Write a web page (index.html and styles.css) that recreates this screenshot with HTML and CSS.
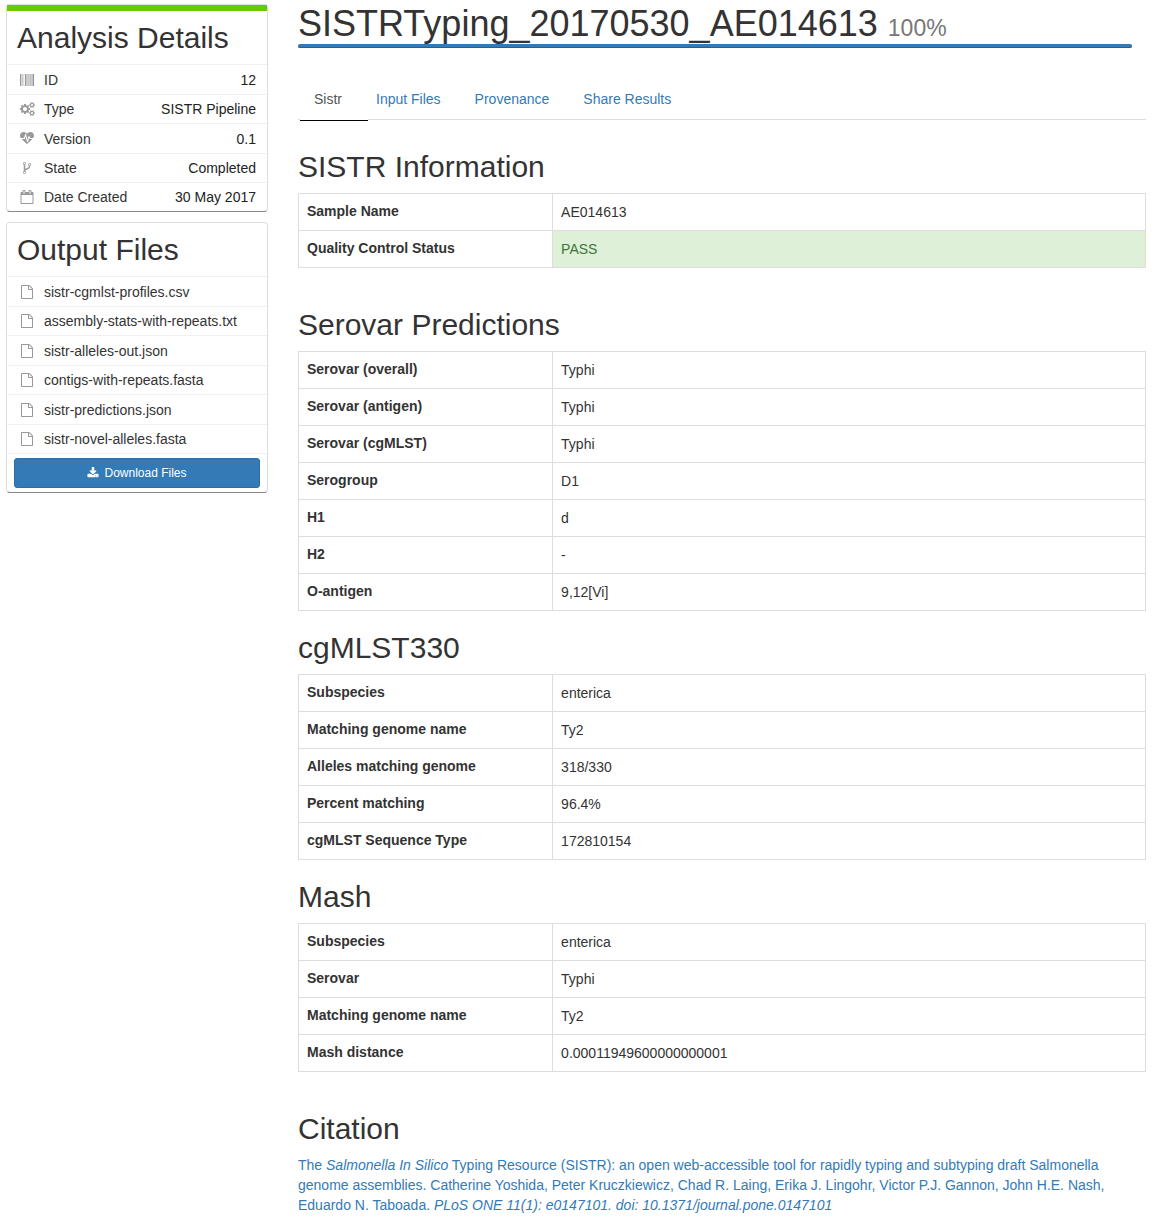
FILE: index.html
```html
<!DOCTYPE html>
<html lang="en">
<head>
<meta charset="utf-8">
<title>SISTRTyping_20170530_AE014613</title>
<link rel="stylesheet" href="styles.css">
</head>
<body>
<svg class="sprite" aria-hidden="true">
  <symbol id="barcode" viewBox="0 0 14 12"><path d="M0 0h1v12H0zM1.500 0h.4v12h-.4zM2.500 0h.5v12h-.5zM3.700 0h.4v12h-.4zM5 0h1v12H5zM6.500 0h.5v12h-.5zM7.500 0h.5v12h-.5zM8.500 0h.8v12h-.8zM9.800 0h.8v12h-.8zM11 0h.5v12H11zM12 0h.6v12H12zM13 0h1v12h-1z"/></symbol>
  <symbol id="cogs" viewBox="0 0 1920 1792"><path d="M896 896q0-106-75-181t-181-75-181 75-75 181 75 181 181 75 181-75 75-181zm768 512q0-52-38-90t-90-38-90 38-38 90q0 53 37.500 90.500t90.500 37.500 90.500-37.500 37.500-90.500zm0-1024q0-52-38-90t-90-38-90 38-38 90q0 53 37.500 90.500t90.500 37.500 90.500-37.500 37.500-90.500zm-384 421v185q0 10-7 19.500t-16 10.500l-155 24q-11 35-32 76 34 48 90 115 7 11 7 20 0 12-7 19-23 30-82.500 89.500t-78.500 59.500q-11 0-21-7l-115-90q-37 19-77 31-11 108-23 155-7 24-30 24h-186q-11 0-20-7.500t-10-17.500l-23-153q-34-10-75-31l-118 89q-7 7-20 7-11 0-21-8-144-133-144-160 0-9 7-19 10-14 41-53t47-61q-23-44-35-82l-152-24q-10-1-17-9.500t-7-19.500v-185q0-10 7-19.500t16-10.500l155-24q11-35 32-76-34-48-90-115-7-11-7-20 0-12 7-20 22-30 82-89t79-59q11 0 21 7l115 90q34-18 77-32 11-108 23-154 7-24 30-24h186q11 0 20 7.500t10 17.500l23 153q34 10 75 31l118-89q8-7 20-7 11 0 21 8 144 133 144 160 0 9-7 19-12 16-42 54t-45 60q23 48 34 82l152 23q10 2 17 10.500t7 19.500zm640 533v140q0 16-149 31-12 27-30 52 51 113 51 138 0 4-4 7-122 71-124 71-8 0-46-47t-52-68q-20 2-30 2t-30-2q-14 21-52 68t-46 47q-2 0-124-71-4-3-4-7 0-25 51-138-18-25-30-52-149-15-149-31v-140q0-16 149-31 13-29 30-52-51-113-51-138 0-4 4-7 4-2 35-20t59-34 30-16q8 0 46 46.500t52 67.500q20-2 30-2t30 2q51-71 92-112l6-2q4 0 124 70 4 3 4 7 0 25-51 138 17 23 30 52 149 15 149 31zm0-1024v140q0 16-149 31-12 27-30 52 51 113 51 138 0 4-4 7-122 71-124 71-8 0-46-47t-52-68q-20 2-30 2t-30-2q-14 21-52 68t-46 47q-2 0-124-71-4-3-4-7 0-25 51-138-18-25-30-52-149-15-149-31v-140q0-16 149-31 13-29 30-52-51-113-51-138 0-4 4-7 4-2 35-20t59-34 30-16q8 0 46 46.500t52 67.500q20-2 30-2t30 2q51-71 92-112l6-2q4 0 124 70 4 3 4 7 0 25-51 138 17 23 30 52 149 15 149 31z"/></symbol>
  <symbol id="heartbeat" viewBox="0 0 1792 1792"><path d="M1280 896h305q-5 6-10 10.500t-9 7.500l-3 4-623 600q-18 18-44 18t-44-18l-624-602q-5-2-21-20h369q22 0 39.500-13.500t22.500-34.500l70-281 190 667q6 20 23 33t39 13q21 0 38-13t23-33l146-485 56 112q18 35 57 35zm512-428q0 145-103 300h-369l-111-221q-8-17-25.500-27t-36.500-8q-45 5-56 46l-129 430-196-686q-6-20-23.500-33t-39.500-13-39 13.500-22 34.500l-116 464h-423q-103-155-103-300 0-220 127-344t351-124q62 0 126.500 21.500t120 58 95.500 68.500 76 68q36-36 76-68t95.500-68.500 120-58 126.500-21.500q224 0 351 124t127 344z"/></symbol>
  <symbol id="fork" viewBox="0 0 1792 1792"><path d="M672 1472q0-40-28-68t-68-28-68 28-28 68 28 68 68 28 68-28 28-68zm0-1152q0-40-28-68t-68-28-68 28-28 68 28 68 68 28 68-28 28-68zm640 128q0-40-28-68t-68-28-68 28-28 68 28 68 68 28 68-28 28-68zm96 0q0 52-26 96.500t-70 69.500q-2 287-226 414-67 38-203 81-128 40-169.500 71t-41.500 100v26q44 25 70 69.500t26 96.500q0 80-56 136t-136 56-136-56-56-136q0-52 26-96.500t70-69.500v-820q-44-25-70-69.500t-26-96.500q0-80 56-136t136-56 136 56 56 136q0 52-26 96.500t-70 69.500v497q54-26 154-57 55-17 87.500-29.500t70.500-31 59-39.500 40.500-51 28-69.500 8.500-91.500q-44-25-70-69.500t-26-96.500q0-80 56-136t136-56 136 56 56 136z"/></symbol>
  <symbol id="calendar" viewBox="0 0 1792 1792"><path d="M192 1664h1408v-1024h-1408v1024zm384-1216v-288q0-14-9-23t-23-9h-64q-14 0-23 9t-9 23v288q0 14 9 23t23 9h64q14 0 23-9t9-23zm768 0v-288q0-14-9-23t-23-9h-64q-14 0-23 9t-9 23v288q0 14 9 23t23 9h64q14 0 23-9t9-23zm384-64v1280q0 52-38 90t-90 38h-1408q-52 0-90-38t-38-90v-1280q0-52 38-90t90-38h128v-96q0-66 47-113t113-47h64q66 0 113 47t47 113v96h384v-96q0-66 47-113t113-47h64q66 0 113 47t47 113v96h128q52 0 90 38t38 90z"/></symbol>
  <symbol id="file" viewBox="0 0 1792 1792"><path d="M1596 380q28 28 48 76t20 88v1152q0 40-28 68t-68 28h-1344q-40 0-68-28t-28-68v-1600q0-40 28-68t68-28h896q40 0 88 20t76 48zm-444-244v376h376q-10-29-22-41l-313-313q-12-12-41-22zm384 1528v-1024h-416q-40 0-68-28t-28-68v-416h-768v1536h1280z"/></symbol>
  <symbol id="download" viewBox="0 0 1792 1792"><path d="M1344 1344q0-26-19-45t-45-19-45 19-19 45 19 45 45 19 45-19 19-45zm256 0q0-26-19-45t-45-19-45 19-19 45 19 45 45 19 45-19 19-45zm128-224v320q0 40-28 68t-68 28h-1472q-40 0-68-28t-28-68v-320q0-40 28-68t68-28h465l135 136q58 56 136 56t136-56l136-136h464q40 0 68 28t28 68zm-325-569q17 41-14 70l-448 448q-18 19-45 19t-45-19l-448-448q-31-29-14-70 17-39 59-39h256v-448q0-26 19-45t45-19h256q26 0 45 19t19 45v448h256q42 0 59 39z"/></symbol>
</svg>
<div class="page">
  <aside class="sidebar">
    <section class="card card-details">
      <h2 class="card-title">Analysis Details</h2>
      <ul class="card-list">
        <li><svg class="icon barcode"><use href="#barcode"/></svg><span>ID</span><span class="value">12</span></li>
        <li><svg class="icon cogs"><use href="#cogs"/></svg><span>Type</span><span class="value">SISTR Pipeline</span></li>
        <li><svg class="icon"><use href="#heartbeat"/></svg><span>Version</span><span class="value">0.1</span></li>
        <li><svg class="icon"><use href="#fork"/></svg><span>State</span><span class="value">Completed</span></li>
        <li><svg class="icon"><use href="#calendar"/></svg><span>Date Created</span><span class="value">30 May 2017</span></li>
      </ul>
    </section>
    <section class="card">
      <h2 class="card-title">Output Files</h2>
      <ul class="card-list">
        <li><svg class="icon"><use href="#file"/></svg><span>sistr-cgmlst-profiles.csv</span></li>
        <li><svg class="icon"><use href="#file"/></svg><span>assembly-stats-with-repeats.txt</span></li>
        <li><svg class="icon"><use href="#file"/></svg><span>sistr-alleles-out.json</span></li>
        <li><svg class="icon"><use href="#file"/></svg><span>contigs-with-repeats.fasta</span></li>
        <li><svg class="icon"><use href="#file"/></svg><span>sistr-predictions.json</span></li>
        <li><svg class="icon"><use href="#file"/></svg><span>sistr-novel-alleles.fasta</span></li>
      </ul>
      <div class="card-footer">
        <button type="button" class="download"><svg class="download-icon"><use href="#download"/></svg>Download Files</button>
      </div>
    </section>
  </aside>
  <main class="main">
    <h1 class="title">SISTRTyping_20170530_AE014613 <small>100%</small></h1>
    <div class="progress"></div>
    <nav class="tabs">
      <a class="tab active" href="#sistr">Sistr</a>
      <a class="tab" href="#inputs">Input Files</a>
      <a class="tab" href="#provenance">Provenance</a>
      <a class="tab" href="#share">Share Results</a>
    </nav>
    <section class="block block-wide" id="sistr">
      <h2>SISTR Information</h2>
      <table>
        <tr><th scope="row">Sample Name</th><td>AE014613</td></tr>
        <tr><th scope="row">Quality Control Status</th><td class="pass">PASS</td></tr>
      </table>
    </section>
    <section class="block">
      <h2>Serovar Predictions</h2>
      <table>
        <tr><th scope="row">Serovar (overall)</th><td>Typhi</td></tr>
        <tr><th scope="row">Serovar (antigen)</th><td>Typhi</td></tr>
        <tr><th scope="row">Serovar (cgMLST)</th><td>Typhi</td></tr>
        <tr><th scope="row">Serogroup</th><td>D1</td></tr>
        <tr><th scope="row">H1</th><td>d</td></tr>
        <tr><th scope="row">H2</th><td>-</td></tr>
        <tr><th scope="row">O-antigen</th><td>9,12[Vi]</td></tr>
      </table>
    </section>
    <section class="block">
      <h2>cgMLST330</h2>
      <table>
        <tr><th scope="row">Subspecies</th><td>enterica</td></tr>
        <tr><th scope="row">Matching genome name</th><td>Ty2</td></tr>
        <tr><th scope="row">Alleles matching genome</th><td>318/330</td></tr>
        <tr><th scope="row">Percent matching</th><td>96.4%</td></tr>
        <tr><th scope="row">cgMLST Sequence Type</th><td>172810154</td></tr>
      </table>
    </section>
    <section class="block block-wide">
      <h2>Mash</h2>
      <table>
        <tr><th scope="row">Subspecies</th><td>enterica</td></tr>
        <tr><th scope="row">Serovar</th><td>Typhi</td></tr>
        <tr><th scope="row">Matching genome name</th><td>Ty2</td></tr>
        <tr><th scope="row">Mash distance</th><td>0.00011949600000000001</td></tr>
      </table>
    </section>
    <section>
      <h2>Citation</h2>
      <a class="citation" href="#citation">The <i>Salmonella In Silico</i> Typing Resource (SISTR): an open web-accessible tool for rapidly typing and subtyping draft Salmonella genome assemblies. Catherine Yoshida, Peter Kruczkiewicz, Chad R. Laing, Erika J. Lingohr, Victor P.J. Gannon, John H.E. Nash, Eduardo N. Taboada. <i>PLoS ONE 11(1): e0147101. doi: 10.1371/journal.pone.0147101</i></a>
    </section>
  </main>
</div>
</body>
</html>
```
FILE: styles.css
```css
* { box-sizing: border-box; }

body {
  margin: 0;
  background: #fff;
  color: #333;
  font: 14px/20px "Liberation Sans", Arial, sans-serif;
}

a { color: #337ab7; text-decoration: none; }

h1, h2 { margin: 0; font-weight: 400; }
h2 { margin-bottom: 10px; font-size: 30px; line-height: 33px; }

.sprite { display: none; }

.page {
  display: grid;
  grid-template-columns: 262px minmax(0, 1fr);
  gap: 30px;
  padding: 4px 29px 4px 6px;
}

/* Sidebar */
.sidebar { display: flex; flex-direction: column; gap: 10px; }

.card {
  border: 1px solid #ddd;
  border-bottom-color: #888;
  border-radius: 4px;
}
.card-details::before {
  content: "";
  display: block;
  height: 6px;
  background: #6c0;
}

.card-title { margin: 0; padding: 10px; }

.card-list { margin: 0; padding: 0; list-style: none; }
.card-list li {
  display: flex;
  align-items: center;
  height: 29px;
  padding: 0 11px 0 13px;
  border-top: 1px solid #f0f0f0;
}
.card-list li:nth-child(odd) { height: 30px; }
.card-list li:last-child { height: 29px; }

.icon { width: 14px; height: 14px; margin-right: 10px; fill: #999; }
.barcode { height: 12px; }
.cogs { width: 15px; margin-right: 9px; }
.value { margin-left: auto; color: #222; }

.card-footer { padding: 4px 7px; border-top: 1px solid #f0f0f0; }
.download {
  display: flex;
  align-items: center;
  justify-content: center;
  gap: 5px;
  width: 100%;
  height: 30px;
  border: 1px solid #2e6da4;
  border-radius: 3px;
  background: #337ab7;
  color: #fff;
  font: inherit;
  font-size: 12px;
}
.download-icon { width: 12px; height: 12px; fill: #fff; }

/* Main column */
.title { font-size: 36px; line-height: 40px; }
.title small { color: #777; font-size: 23px; line-height: 1; }

.progress {
  height: 4px;
  margin: 0 14px 31px 0;
  border-radius: 2px;
  background: #337ab7;
  box-shadow: inset 0 -1px 0 #286090;
}

.tabs {
  display: flex;
  gap: 2px;
  margin-bottom: 30px;
  border-bottom: 1px solid #ddd;
}
.tab { position: relative; padding: 10px 16px; }
.active { color: #555; }
.active::after {
  content: "";
  position: absolute;
  left: 2px;
  right: -10px;
  bottom: -2px;
  height: 2px;
  border-bottom: 1px solid #000;
  background: #fff;
}

.block { margin-bottom: 20px; }
.block-wide { margin-bottom: 40px; }

table { width: 100%; table-layout: fixed; border-collapse: collapse; }
th, td {
  height: 37px;
  padding: 8px;
  border: 1px solid #ddd;
  text-align: left;
}
th { width: 30%; padding: 7px 8px 9px; }
.pass { background: #dff0d8; color: #3c763d; }

.citation { display: block; }
```
